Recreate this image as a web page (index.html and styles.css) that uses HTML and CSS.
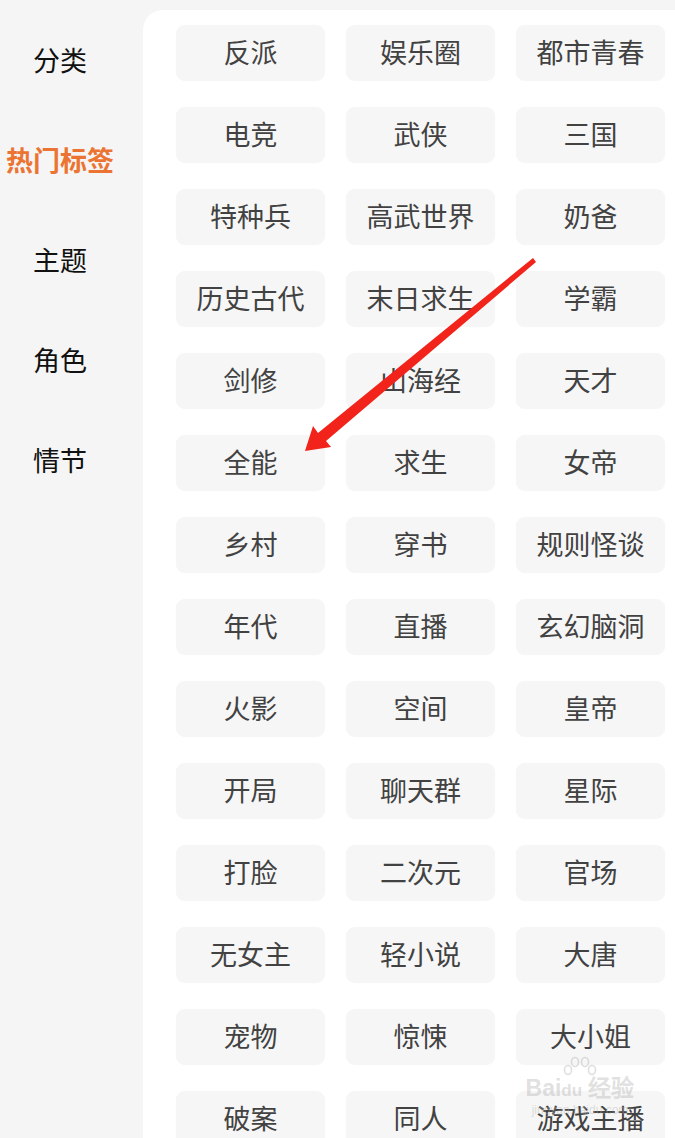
FILE: index.html
```html
<!DOCTYPE html>
<html lang="zh-CN">
<head>
    <meta charset="UTF-8">
    <meta name="viewport" content="width=device-width, initial-scale=1.0">
    <title>热门标签</title>
    <link rel="stylesheet" href="styles.css">
</head>
<body>
    <div class="page">
        <div class="sidebar">
            <div class="side-item">分类</div>
            <div class="side-item active">热门标签</div>
            <div class="side-item">主题</div>
            <div class="side-item">角色</div>
            <div class="side-item">情节</div>
        </div>
        <div class="panel">
            <div class="tag">反派</div>
            <div class="tag">娱乐圈</div>
            <div class="tag">都市青春</div>
            <div class="tag">电竞</div>
            <div class="tag">武侠</div>
            <div class="tag">三国</div>
            <div class="tag">特种兵</div>
            <div class="tag">高武世界</div>
            <div class="tag">奶爸</div>
            <div class="tag">历史古代</div>
            <div class="tag">末日求生</div>
            <div class="tag">学霸</div>
            <div class="tag">剑修</div>
            <div class="tag">山海经</div>
            <div class="tag">天才</div>
            <div class="tag">全能</div>
            <div class="tag">求生</div>
            <div class="tag">女帝</div>
            <div class="tag">乡村</div>
            <div class="tag">穿书</div>
            <div class="tag">规则怪谈</div>
            <div class="tag">年代</div>
            <div class="tag">直播</div>
            <div class="tag">玄幻脑洞</div>
            <div class="tag">火影</div>
            <div class="tag">空间</div>
            <div class="tag">皇帝</div>
            <div class="tag">开局</div>
            <div class="tag">聊天群</div>
            <div class="tag">星际</div>
            <div class="tag">打脸</div>
            <div class="tag">二次元</div>
            <div class="tag">官场</div>
            <div class="tag">无女主</div>
            <div class="tag">轻小说</div>
            <div class="tag">大唐</div>
            <div class="tag">宠物</div>
            <div class="tag">惊悚</div>
            <div class="tag">大小姐</div>
            <div class="tag">破案</div>
            <div class="tag">同人</div>
            <div class="tag">游戏主播</div>
        </div>
    </div>

    <!-- annotation arrow drawn over the screenshot -->
    <svg class="arrow" width="675" height="1138" viewBox="0 0 675 1138">
        <polygon points="533,258 536,262 326,441 331,447 305,451 313,426 318,433" fill="#f2231a"/>
    </svg>

    <div class="watermark">
        <svg class="wm-paw" width="40" height="26" viewBox="0 0 40 26">
            <g fill="none" stroke="currentColor" stroke-width="1.6">
                <ellipse cx="8" cy="14" rx="3.5" ry="4.5"/>
                <ellipse cx="15" cy="6" rx="3.5" ry="4.5"/>
                <ellipse cx="25" cy="6" rx="3.5" ry="4.5"/>
                <ellipse cx="32" cy="14" rx="3.5" ry="4.5"/>
            </g>
        </svg>
        <div class="wm-logo">Bai<span class="wm-du">du</span> 经验</div>
        <div class="wm-url">jingyan.baidu.com</div>
    </div>
</body>
</html>
```

FILE: styles.css
```css
* {
    box-sizing: border-box;
    margin: 0;
    padding: 0;
}
body {
    font-family: "Noto Sans CJK SC", "Noto Sans", sans-serif;
    background-color: #f5f5f5;
    color: #333;
    height: 1138px;
    overflow: hidden;
    position: relative;
}
.page {
    display: flex;
    height: 100%;
}
.sidebar {
    width: 143px;
    flex-shrink: 0;
    padding-top: 10px;
}
.side-item {
    height: 100px;
    display: flex;
    align-items: center;
    justify-content: center;
    font-size: 27px;
    color: #111;
    padding-right: 23px;
    padding-bottom: 2px;
}
.side-item.active {
    color: #ec7433;
    font-weight: bold;
    font-size: 27px;
    padding-right: 23px;
}
.panel {
    flex-grow: 1;
    margin-top: 10px;
    background-color: #fff;
    border-top-left-radius: 20px;
    padding: 15px 10px 0 33px;
    display: grid;
    grid-template-columns: 149px 149px 149px;
    grid-auto-rows: 56px;
    column-gap: 21px;
    row-gap: 26px;
    align-content: start;
}
.tag {
    background-color: #f6f6f6;
    border-radius: 9px;
    display: flex;
    align-items: center;
    justify-content: center;
    font-size: 27px;
    color: #424242;
    padding-bottom: 3px;
    box-shadow: 0 0 1px rgba(0,0,0,0.04);
}
.arrow {
    position: absolute;
    left: 0;
    top: 0;
    pointer-events: none;
}
.watermark {
    position: absolute;
    left: 518px;
    top: 1056px;
    width: 124px;
    color: rgba(175, 175, 175, 0.4);
    font-family: "Liberation Sans", sans-serif;
    text-align: center;
    pointer-events: none;
}
.wm-paw {
    display: block;
    margin: 0 0 -6px 42px;
}
.wm-logo {
    font-size: 23px;
    font-weight: bold;
    line-height: 24px;
}
.wm-du {
    font-size: 17px;
}
.wm-url {
    font-size: 12px;
    line-height: 14px;
}
```
